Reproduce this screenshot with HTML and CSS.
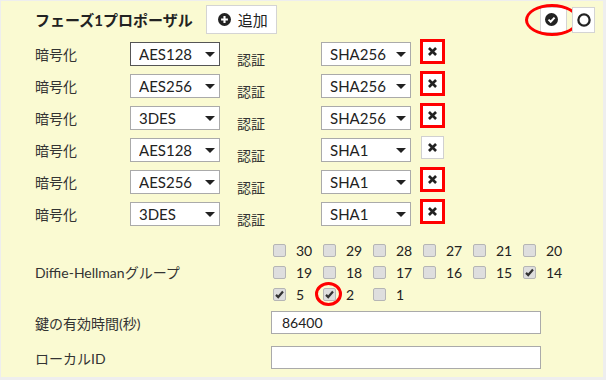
FILE: index.html
```html
<!DOCTYPE html>
<html lang="ja">
<head>
    <meta charset="UTF-8">
    <meta name="viewport" content="width=device-width, initial-scale=1.0">
    <title>フェーズ1プロポーザル</title>
    <link rel="stylesheet" href="styles.css">
</head>
<body>
    <div class="panel">
        <div class="head">
            <span class="title">フェーズ1プロポーザル</span>
            <button class="btn add" type="button">
                <svg width="13" height="13" viewBox="0 0 16 16"><circle cx="8" cy="8" r="8" fill="#222"/><path d="M3.8 6.7h8.4v2.6H3.8z M6.7 3.8h2.6v8.4H6.7z" fill="#fff"/></svg>
                追加
            </button>
            <div class="tools">
                <button class="btn tool" type="button">
                    <svg width="13" height="13" viewBox="0 0 16 16"><circle cx="8" cy="8" r="8" fill="#222"/><path d="M4.3 8.2 7 10.8 11.8 5.6" stroke="#fff" stroke-width="2.4" fill="none"/></svg>
                    <span class="mark-ring top-ring"></span>
                </button>
                <button class="btn tool narrow" type="button">
                    <svg width="14" height="14" viewBox="0 0 16 16"><circle cx="8" cy="8" r="6.4" stroke="#222" stroke-width="2.6" fill="none"/></svg>
                </button>
            </div>
        </div>

        <div class="row">
            <span class="lbl">暗号化</span>
            <span class="sel"><select class="focus"><option>AES128</option></select></span>
            <span class="auth">認証</span>
            <span class="sel"><select><option>SHA256</option></select></span>
            <button class="del marked" type="button"><svg width="11" height="11" viewBox="0 0 14 14"><path d="M2.5 2.5 11.5 11.5 M11.5 2.5 2.5 11.5" stroke="#222" stroke-width="3.4"/></svg></button>
        </div>
        <div class="row">
            <span class="lbl">暗号化</span>
            <span class="sel"><select><option>AES256</option></select></span>
            <span class="auth">認証</span>
            <span class="sel"><select><option>SHA256</option></select></span>
            <button class="del marked" type="button"><svg width="11" height="11" viewBox="0 0 14 14"><path d="M2.5 2.5 11.5 11.5 M11.5 2.5 2.5 11.5" stroke="#222" stroke-width="3.4"/></svg></button>
        </div>
        <div class="row">
            <span class="lbl">暗号化</span>
            <span class="sel"><select><option>3DES</option></select></span>
            <span class="auth">認証</span>
            <span class="sel"><select><option>SHA256</option></select></span>
            <button class="del marked" type="button"><svg width="11" height="11" viewBox="0 0 14 14"><path d="M2.5 2.5 11.5 11.5 M11.5 2.5 2.5 11.5" stroke="#222" stroke-width="3.4"/></svg></button>
        </div>
        <div class="row">
            <span class="lbl">暗号化</span>
            <span class="sel"><select><option>AES128</option></select></span>
            <span class="auth">認証</span>
            <span class="sel"><select><option>SHA1</option></select></span>
            <button class="del" type="button"><svg width="11" height="11" viewBox="0 0 14 14"><path d="M2.5 2.5 11.5 11.5 M11.5 2.5 2.5 11.5" stroke="#222" stroke-width="3.4"/></svg></button>
        </div>
        <div class="row">
            <span class="lbl">暗号化</span>
            <span class="sel"><select><option>AES256</option></select></span>
            <span class="auth">認証</span>
            <span class="sel"><select><option>SHA1</option></select></span>
            <button class="del marked" type="button"><svg width="11" height="11" viewBox="0 0 14 14"><path d="M2.5 2.5 11.5 11.5 M11.5 2.5 2.5 11.5" stroke="#222" stroke-width="3.4"/></svg></button>
        </div>
        <div class="row">
            <span class="lbl">暗号化</span>
            <span class="sel"><select><option>3DES</option></select></span>
            <span class="auth">認証</span>
            <span class="sel"><select><option>SHA1</option></select></span>
            <button class="del marked" type="button"><svg width="11" height="11" viewBox="0 0 14 14"><path d="M2.5 2.5 11.5 11.5 M11.5 2.5 2.5 11.5" stroke="#222" stroke-width="3.4"/></svg></button>
        </div>

        <div class="dh">
            <span class="lbl">Diffie-Hellmanグループ</span>
            <div class="groups">
                <label class="cell"><span class="cb"></span>30</label>
                <label class="cell"><span class="cb"></span>29</label>
                <label class="cell"><span class="cb"></span>28</label>
                <label class="cell"><span class="cb"></span>27</label>
                <label class="cell"><span class="cb"></span>21</label>
                <label class="cell"><span class="cb"></span>20</label>
                <label class="cell"><span class="cb"></span>19</label>
                <label class="cell"><span class="cb"></span>18</label>
                <label class="cell"><span class="cb"></span>17</label>
                <label class="cell"><span class="cb"></span>16</label>
                <label class="cell"><span class="cb"></span>15</label>
                <label class="cell"><span class="cb"><svg width="11" height="11" viewBox="0 0 12 12"><path d="M2.2 6.4 4.6 8.8 9.8 2.8" stroke="#333" stroke-width="2.4" fill="none"/></svg></span>14</label>
                <label class="cell"><span class="cb"><svg width="11" height="11" viewBox="0 0 12 12"><path d="M2.2 6.4 4.6 8.8 9.8 2.8" stroke="#333" stroke-width="2.4" fill="none"/></svg></span>5</label>
                <label class="cell"><span class="cb"><svg width="11" height="11" viewBox="0 0 12 12"><path d="M2.2 6.4 4.6 8.8 9.8 2.8" stroke="#333" stroke-width="2.4" fill="none"/></svg><span class="mark-ring cb-ring"></span></span>2</label>
                <label class="cell"><span class="cb"></span>1</label>
            </div>
        </div>

        <div class="field">
            <span class="lbl">鍵の有効時間(秒)</span>
            <input type="text" value="86400">
        </div>
        <div class="field">
            <span class="lbl">ローカルID</span>
            <input type="text" value="">
        </div>
    </div>
</body>
</html>
```

FILE: styles.css
```css
body {
    margin: 0;
    background: #eeeeee;
    font-family: Lato, "Noto Sans CJK JP", sans-serif;
    color: #333;
}
.panel {
    width: 602px;
    height: 376px;
    margin: 1px 3px 3px 1px;
    padding: 0 8px 2px 34px;
    box-sizing: border-box;
    background: #fafad2;
}
.head {
    display: flex;
    align-items: center;
    height: 37px;
}
.title {
    font-size: 15px;
    font-weight: bold;
    color: #222;
    margin-right: 13px;
}
.btn {
    display: flex;
    align-items: center;
    background: #fff;
    border: 1px solid #d4d4d4;
    font-family: inherit;
    color: #222;
    cursor: pointer;
}
.add {
    height: 29px;
    padding: 0 8px 0 11px;
    gap: 7px;
    font-size: 15px;
}
.tools {
    margin-left: auto;
    display: flex;
    gap: 5px;
}
.tool {
    position: relative;
    width: 27px;
    height: 26px;
    padding: 0 0 0 4px;
}
.tool.narrow {
    width: 23px;
    padding-left: 4px;
}
.mark-ring {
    position: absolute;
    border: 3px solid #f00;
    border-radius: 50%;
    box-sizing: border-box;
}
.top-ring {
    left: -16px;
    top: -4px;
    width: 54px;
    height: 32px;
}
.row {
    display: flex;
    align-items: center;
    height: 32px;
}
.row:first-of-type {
    margin-top: 0;
}
.lbl {
    font-size: 14px;
    width: 95px;
}
.sel {
    position: relative;
    width: 90px;
}
.sel::after {
    content: "";
    position: absolute;
    right: 5px;
    top: 10px;
    border-left: 5px solid transparent;
    border-right: 5px solid transparent;
    border-top: 5px solid #222;
}
.sel select {
    appearance: none;
    display: block;
    width: 100%;
    height: 24px;
    margin: 0;
    padding: 0 0 0 8px;
    border: 1px solid #aaa;
    border-radius: 0;
    background: #fff;
    font-family: inherit;
    font-size: 15px;
    color: #222;
}
.sel select.focus {
    border-color: #555;
}
.auth {
    font-size: 14px;
    width: 84px;
    margin: 10px 0 0 17px;
}
.del {
    display: flex;
    align-items: center;
    justify-content: center;
    width: 23px;
    height: 23px;
    margin: 0 1px 5px 10px;
    padding: 0;
    background: #fff;
    border: 1px solid #d0d0d0;
    box-sizing: border-box;
}
.del.marked {
    width: 25px;
    height: 25px;
    margin: 0 0 5px 9px;
    border: 3px solid #f00;
}
.dh {
    display: flex;
    align-items: center;
    padding-top: 9px;
}
.dh .lbl {
    width: 238px;
}
.groups {
    display: grid;
    grid-template-columns: repeat(6, 50px);
    grid-auto-rows: 22px;
    align-items: center;
}
.cell {
    display: flex;
    align-items: center;
    gap: 10px;
    font-size: 14px;
    color: #222;
}
.cb {
    position: relative;
    display: flex;
    align-items: center;
    justify-content: center;
    width: 13px;
    height: 13px;
    box-sizing: border-box;
    border: 1px solid #b5b5b5;
    border-radius: 2px;
    background: #dedede;
}
.cb-ring {
    left: -9px;
    top: -7px;
    width: 27px;
    height: 24px;
}
.field {
    display: flex;
    align-items: center;
    height: 35px;
}
.field .lbl {
    width: 236px;
}
.field input {
    width: 270px;
    height: 23px;
    box-sizing: border-box;
    margin: 0;
    padding: 0 10px;
    border: 1px solid #aaa;
    background: #fff;
    font-family: inherit;
    font-size: 14px;
    color: #222;
}
```
